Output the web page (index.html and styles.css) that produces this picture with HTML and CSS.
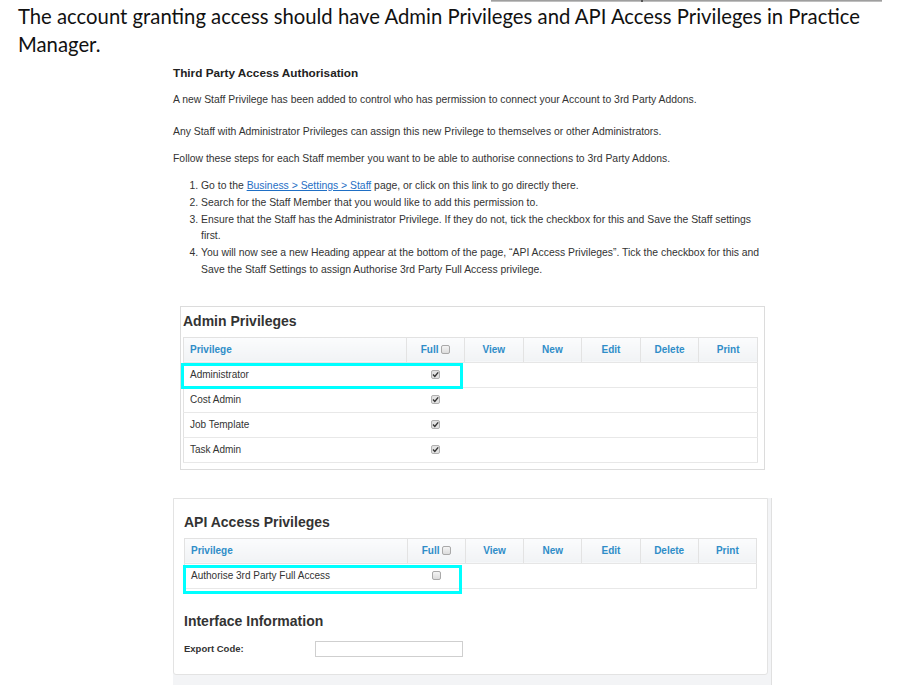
FILE: index.html
```html
<!DOCTYPE html>
<html lang="en">
<head>
<meta charset="utf-8">
<title>Third Party Access Authorisation</title>
<link rel="stylesheet" href="styles.css">
</head>
<body>
<div class="topline"><span class="tick"></span></div>
<p class="intro">The account granting access should have Admin Privileges and API Access Privileges in Practice<br>Manager.</p>

<section class="article">
  <h2 class="article-title">Third Party Access Authorisation</h2>
  <p class="para p1">A new Staff Privilege has been added to control who has permission to connect your Account to 3rd Party Addons.</p>
  <p class="para p2">Any Staff with Administrator Privileges can assign this new Privilege to themselves or other Administrators.</p>
  <p class="para p3">Follow these steps for each Staff member you want to be able to authorise connections to 3rd Party Addons.</p>
  <ol class="steps">
    <li>Go to the <a href="#">Business &gt; Settings &gt; Staff</a> page, or click on this link to go directly there.</li>
    <li>Search for the Staff Member that you would like to add this permission to.</li>
    <li>Ensure that the Staff has the Administrator Privilege. If they do not, tick the checkbox for this and Save the Staff settings first.</li>
    <li>You will now see a new Heading appear at the bottom of the page, “API Access Privileges”. Tick the checkbox for this and Save the Staff Settings to assign Authorise 3rd Party Full Access privilege.</li>
  </ol>
</section>

<section class="panel admin-panel">
  <h3 class="panel-title">Admin Privileges</h3>
  <table class="priv-table">
    <colgroup>
      <col class="c-priv"><col class="c-full"><col class="c-act"><col class="c-act"><col class="c-act"><col class="c-act"><col class="c-act">
    </colgroup>
    <thead>
      <tr>
        <th class="th-priv">Privilege</th>
        <th>Full <span class="cb"></span></th>
        <th>View</th><th>New</th><th>Edit</th><th>Delete</th><th>Print</th>
      </tr>
    </thead>
    <tbody>
      <tr><td class="td-priv">Administrator</td><td class="td-full"><span class="cb checked"><svg viewBox="0 0 9 9" width="9" height="9"><path d="M2 4.6 L3.8 6.4 L7.2 2.4" fill="none" stroke="#333" stroke-width="1.4"/></svg></span></td><td colspan="5"></td></tr>
      <tr><td class="td-priv">Cost Admin</td><td class="td-full"><span class="cb checked"><svg viewBox="0 0 9 9" width="9" height="9"><path d="M2 4.6 L3.8 6.4 L7.2 2.4" fill="none" stroke="#333" stroke-width="1.4"/></svg></span></td><td colspan="5"></td></tr>
      <tr><td class="td-priv">Job Template</td><td class="td-full"><span class="cb checked"><svg viewBox="0 0 9 9" width="9" height="9"><path d="M2 4.6 L3.8 6.4 L7.2 2.4" fill="none" stroke="#333" stroke-width="1.4"/></svg></span></td><td colspan="5"></td></tr>
      <tr><td class="td-priv">Task Admin</td><td class="td-full"><span class="cb checked"><svg viewBox="0 0 9 9" width="9" height="9"><path d="M2 4.6 L3.8 6.4 L7.2 2.4" fill="none" stroke="#333" stroke-width="1.4"/></svg></span></td><td colspan="5"></td></tr>
    </tbody>
  </table>
  <div class="highlight hl-admin"></div>
</section>

<section class="api-wrap">
  <div class="panel api-panel">
    <h3 class="panel-title">API Access Privileges</h3>
    <table class="priv-table api-table">
      <colgroup>
        <col class="c-priv"><col class="c-full"><col class="c-act"><col class="c-act"><col class="c-act"><col class="c-act"><col class="c-act">
      </colgroup>
      <thead>
        <tr>
          <th class="th-priv">Privilege</th>
          <th>Full <span class="cb"></span></th>
          <th>View</th><th>New</th><th>Edit</th><th>Delete</th><th>Print</th>
        </tr>
      </thead>
      <tbody>
        <tr><td class="td-priv">Authorise 3rd Party Full Access</td><td class="td-full"><span class="cb"></span></td><td colspan="5"></td></tr>
      </tbody>
    </table>
    <h3 class="panel-title info-title">Interface Information</h3>
    <div class="field">
      <label class="field-label" for="export">Export Code:</label>
      <input class="field-input" id="export" type="text">
    </div>
    <div class="highlight hl-api"></div>
  </div>
</section>
</body>
</html>
```

FILE: styles.css
```css
html, body {
  margin: 0;
  padding: 0;
  background: #fff;
}
body {
  font-family: "Liberation Sans", Arial, sans-serif;
  color: #333;
  width: 899px;
  height: 686px;
  overflow: hidden;
}

.topline {
  height: 2px;
  width: 391px;
  margin-left: 491px;
  background: linear-gradient(#8f8f8f, #cfcfcf);
  display: flex;
}
.tick {
  width: 2px;
  height: 2px;
  margin-left: 150px;
  background: #555;
}

.intro {
  margin: 0;
  padding-left: 18px;
  font-family: Lato, "Open Sans", sans-serif;
  font-size: 20.3px;
  line-height: 28px;
  color: #111;
}

.article {
  margin-left: 173px;
  width: 594px;
  font-size: 10.4px;
  line-height: 17px;
  color: #333;
}
.article-title {
  margin: 6px 0 0;
  font-size: 11.75px;
  line-height: 17px;
  font-weight: bold;
  color: #222;
}
.para { margin: 0; }
.p1 { margin-top: 10px; }
.p2 { margin-top: 15px; }
.p3 { margin-top: 10px; }
.steps {
  margin: 11px 0 0;
  padding-left: 28px;
}
.steps li { line-height: 16.8px; }
.steps a { color: #1f6fc5; text-decoration: underline; }

.panel {
  position: relative;
  background: #fff;
}
.admin-panel {
  margin: 27px 0 0 180px;
  width: 585px;
  box-sizing: border-box;
  border: 1px solid #dcdcdc;
  padding: 4px 7px 6px 2px;
}
.panel-title {
  margin: 0;
  font-size: 14px;
  line-height: 20px;
  font-weight: bold;
  color: #333;
}
.admin-panel .panel-title { margin-bottom: 6px; }

.priv-table {
  border-collapse: collapse;
  table-layout: fixed;
  width: 574px;
  border: 1px solid #e2e2e2;
  font-size: 10px;
}
.api-table { width: 572px; }
.c-priv { width: 223px; }
.c-full { width: 58px; }
.c-act { width: 58.6px; }
.api-table .c-act { width: 58.2px; }
.priv-table th {
  height: 24px;
  padding: 0;
  background: linear-gradient(#fbfcfd, #f1f3f5);
  border-left: 1px solid #e3e3e3;
  border-bottom: 1px solid #e6e6e6;
  color: #2f8dc8;
  font-weight: bold;
  font-size: 10px;
  text-align: center;
  vertical-align: middle;
}
.priv-table th.th-priv {
  text-align: left;
  padding-left: 6px;
  border-left: none;
}
.priv-table td {
  height: 24px;
  padding: 0;
  border-bottom: 1px solid #e8e8e8;
  vertical-align: middle;
}
.td-priv { padding-left: 6px !important; color: #333; }
.td-full { text-align: center; }

.cb {
  display: inline-block;
  width: 9px;
  height: 9px;
  box-sizing: border-box;
  border: 1px solid #a9a9a9;
  border-radius: 2px;
  background: linear-gradient(#f4f4f4, #dcdcdc);
  vertical-align: -1px;
  position: relative;
}
.cb.checked {
  background: #e2e2e2;
  border-color: #b0b0b0;
}
.cb svg {
  position: absolute;
  left: -1px;
  top: -1px;
}

.highlight {
  position: absolute;
  box-sizing: border-box;
  border: 3px solid #0ff;
}
.hl-admin {
  left: 0px;
  top: 56px;
  width: 282px;
  height: 26px;
}

.api-wrap {
  margin: 28px 0 0 173px;
  width: 599px;
  height: 187px;
  background: #f3f4f6;
  box-sizing: border-box;
  border-right: 1px solid #e0e0e0;
}
.api-panel {
  width: 595px;
  height: 177px;
  box-sizing: border-box;
  border: 1px solid #e3e3e3;
  border-radius: 0 0 3px 3px;
  padding: 13px 12px 0 10px;
}
.api-panel .panel-title { margin-bottom: 6px; }
.api-panel .info-title { margin: 22px 0 0; }
.hl-api {
  left: 9px;
  top: 66px;
  width: 279px;
  height: 29px;
}
.field {
  display: flex;
  align-items: center;
  margin-top: 10px;
}
.field-label {
  width: 131px;
  font-size: 9.5px;
  font-weight: bold;
  color: #333;
}
.field-input {
  width: 148px;
  height: 16px;
  box-sizing: border-box;
  border: 1px solid #cfcfcf;
  padding: 0;
  margin: 0;
}
```
